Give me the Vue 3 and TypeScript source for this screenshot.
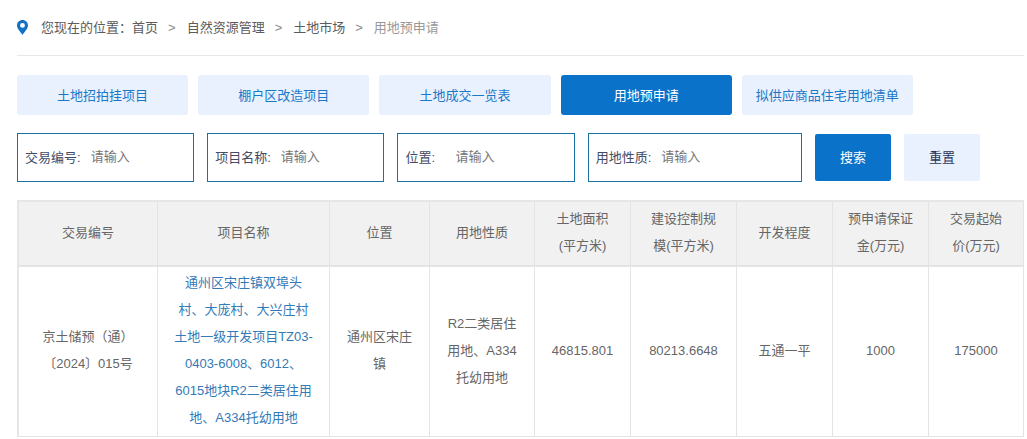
<script setup lang="ts">
import { ref, reactive } from 'vue'

interface Field {
  id: string
  label: string
}

interface Column {
  title: string
  share: number
}

interface Row {
  code: string
  name: string
  place: string
  nature: string
  area: string
  scale: string
  level: string
  deposit: string
  price: string
}

const crumbs: string[] = ['首页', '自然资源管理', '土地市场']

const tabs: string[] = [
  '土地招拍挂项目',
  '棚户区改造项目',
  '土地成交一览表',
  '用地预申请',
  '拟供应商品住宅用地清单',
]
const activeTab = ref<number>(3)

const fields: Field[] = [
  { id: 'code', label: '交易编号:' },
  { id: 'name', label: '项目名称:' },
  { id: 'place', label: '位置:' },
  { id: 'nature', label: '用地性质:' },
]
const query = reactive<Record<string, string>>({ code: '', name: '', place: '', nature: '' })

function reset(): void {
  for (const key of Object.keys(query)) query[key] = ''
}

const columns: Column[] = [
  { title: '交易编号', share: 139 },
  { title: '项目名称', share: 172 },
  { title: '位置', share: 100 },
  { title: '用地性质', share: 105 },
  { title: '土地面积\n(平方米)', share: 96 },
  { title: '建设控制规\n模(平方米)', share: 106 },
  { title: '开发程度', share: 96 },
  { title: '预申请保证\n金(万元)', share: 96 },
  { title: '交易起始\n价(万元)', share: 95 },
]
const totalShare = columns.reduce((sum, c) => sum + c.share, 0)

const rows: Row[] = [
  {
    code: '京土储预（通）〔2024〕015号',
    name: '通州区宋庄镇双埠头村、大庞村、大兴庄村土地一级开发项目TZ03-0403-6008、6012、6015地块R2二类居住用地、A334托幼用地',
    place: '通州区宋庄镇',
    nature: 'R2二类居住用地、A334托幼用地',
    area: '46815.801',
    scale: '80213.6648',
    level: '五通一平',
    deposit: '1000',
    price: '175000',
  },
]
</script>

<template>
  <main class="page">
    <nav class="breadcrumb" aria-label="您现在的位置">
      <svg class="pin" viewBox="0 0 11 15" aria-hidden="true">
        <path
          fill="#1272c4"
          fill-rule="evenodd"
          d="M5.5 0C2.4 0 0 2.4 0 5.4c0 3.4 3.6 6.2 5.5 9.6C7.4 11.600 11 8.800 11 5.400 11 2.400 8.600 0 5.500 0zm0 3a2.400 2.400 0 1 1 0 4.800 2.400 2.400 0 0 1 0-4.800z"
        />
      </svg>
      <span>您现在的位置：</span>
      <template v-for="c in crumbs" :key="c">
        <a href="#">{{ c }}</a>
        <span class="sep">&gt;</span>
      </template>
      <span class="current">用地预申请</span>
    </nav>

    <div class="tabs">
      <button
        v-for="(t, i) in tabs"
        :key="t"
        type="button"
        class="tab"
        :class="{ active: i === activeTab }"
        @click="activeTab = i"
      >
        {{ t }}
      </button>
    </div>

    <form class="search" @submit.prevent>
      <div v-for="f in fields" :key="f.id" class="field">
        <label :for="f.id">{{ f.label }}</label>
        <input :id="f.id" v-model="query[f.id]" type="text" placeholder="请输入" />
      </div>
      <button type="submit" class="btn primary">搜索</button>
      <button type="button" class="btn" @click="reset">重置</button>
    </form>

    <table class="list">
      <colgroup>
        <col v-for="c in columns" :key="c.title" :style="{ width: (c.share / totalShare) * 100 + '%' }" />
      </colgroup>
      <thead>
        <tr>
          <th v-for="c in columns" :key="c.title" scope="col">{{ c.title }}</th>
        </tr>
      </thead>
      <tbody>
        <tr v-for="r in rows" :key="r.code">
          <td>{{ r.code }}</td>
          <td><a href="#">{{ r.name }}</a></td>
          <td>{{ r.place }}</td>
          <td>{{ r.nature }}</td>
          <td>{{ r.area }}</td>
          <td>{{ r.scale }}</td>
          <td>{{ r.level }}</td>
          <td>{{ r.deposit }}</td>
          <td>{{ r.price }}</td>
        </tr>
      </tbody>
    </table>
  </main>
</template>

<style>
body {
  background: #fff;
}
</style>

<style scoped>
.page {
  padding: 0 3px 2px 17px;
  font-family: "Liberation Sans", "Noto Sans CJK SC", sans-serif;
  font-size: 13px;
  color: #666;
  background: #fff;
}

.page *,
.page {
  box-sizing: border-box;
}

button,
input {
  font: inherit;
}

.breadcrumb {
  display: flex;
  align-items: center;
  height: 56px;
  border-bottom: 1px solid #e8e8e8;
  line-height: 20px;
  color: #5c5c5c;
}

.breadcrumb a {
  color: #5c5c5c;
  text-decoration: none;
}

.pin {
  width: 11px;
  height: 15px;
  margin-right: 13px;
}

.sep {
  padding: 0 11px 0 10px;
  color: #888;
}

.current {
  color: #999;
}

.tabs {
  display: flex;
  gap: 10px;
  margin-top: 19px;
}

.tab {
  width: 17%;
  height: 40px;
  padding: 0 0 2px;
  border: 0;
  border-radius: 3px;
  background: #e9f1fe;
  color: #1a78c8;
  white-space: nowrap;
  cursor: pointer;
}

.tab.active {
  background: #0a72c9;
  color: #fff;
}

.search {
  display: grid;
  grid-template-columns: repeat(3, 177fr) 214fr 76px 76px;
  align-items: center;
  gap: 13px;
  margin: 18px 44px 18px 0;
}

.field {
  display: flex;
  align-items: center;
  gap: 10px;
  min-width: 0;
  height: 49px;
  padding: 0 7px 2px;
  border: 1px solid #1a72a2;
}

.field label {
  flex: none;
  min-width: 40px;
  color: #424c66;
}

.field input {
  flex: 1;
  min-width: 0;
  height: 32px;
  padding: 0;
  border: 0;
  outline: 0;
  background: transparent;
  color: #333;
}

.field input::placeholder {
  color: #757575;
}

.btn {
  height: 47px;
  padding: 0 0 2px;
  border: 0;
  border-radius: 2px;
  background: #e9f1fe;
  color: #2b3658;
  cursor: pointer;
}

.btn.primary {
  background: #0a72c9;
  color: #fff;
}

.list {
  width: 100%;
  table-layout: fixed;
  border-collapse: separate;
  border-spacing: 0;
  border: solid #e6e6e6;
  border-width: 2px 0 0 2px;
  line-height: 27px;
  text-align: center;
}

.list th {
  padding: 3px 8px 6px;
  border: solid #e4e4e4;
  border-width: 0 1px 2px 0;
  background: #f1f1f1;
  font-weight: 400;
  white-space: pre-line;
}

.list td {
  padding: 2px 15px 5px;
  border: solid #e4e4e4;
  border-width: 0 1px 1px 0;
}

.list a {
  color: #337ab7;
  text-decoration: none;
}
</style>
